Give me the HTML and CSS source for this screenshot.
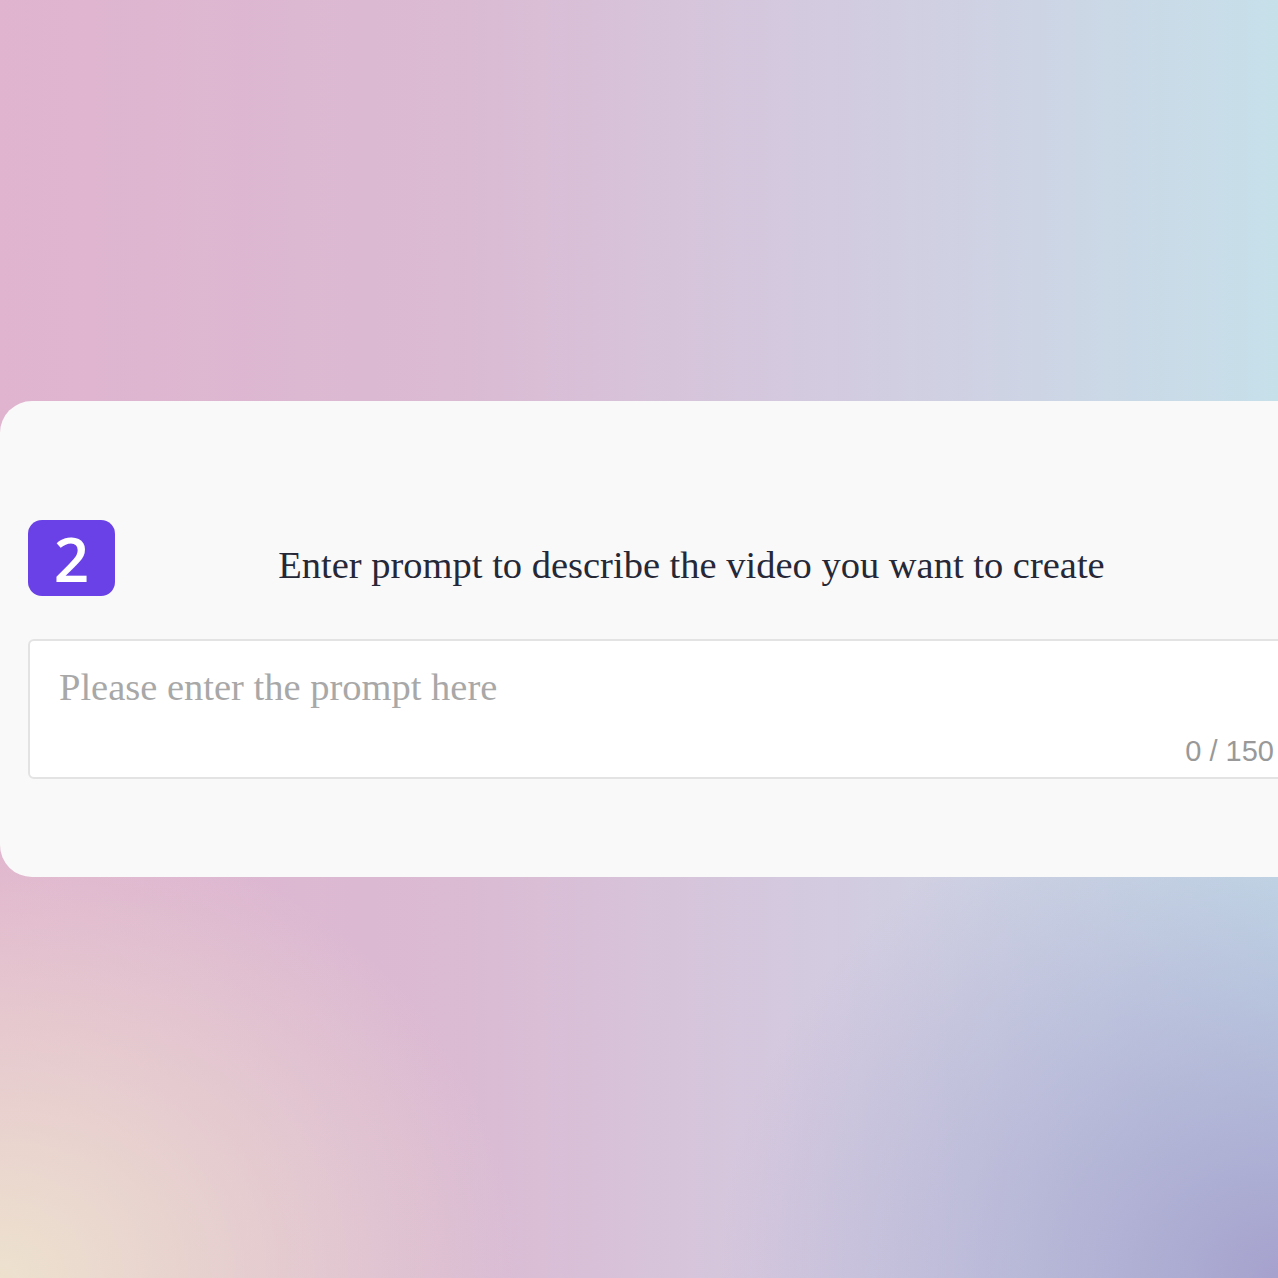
FILE: index.html
```html
<!DOCTYPE html>
<html lang="en">
<head>
<meta charset="utf-8">
<title>Prompt</title>
<link rel="stylesheet" href="styles.css">
</head>
<body>
<div class="page">
  <section class="card">
    <div class="step-row">
      <div class="badge">2</div>
      <h2 class="step-title">Enter prompt to describe the video you want to create</h2>
    </div>
    <div class="prompt-box">
      <div class="placeholder">Please enter the prompt here</div>
      <div class="counter">0 / 150</div>
    </div>
  </section>
</div>
</body>
</html>
```

FILE: styles.css
```css
html, body {
  margin: 0;
  padding: 0;
  width: 1278px;
  height: 1278px;
  overflow: hidden;
}
.page {
  width: 1278px;
  height: 1278px;
  overflow: hidden;
  padding-top: 401px;
  box-sizing: border-box;
  background:
    radial-gradient(ellipse 520px 460px at 0% 100%, rgba(238,228,206,0.95), rgba(238,228,206,0) 100%),
    radial-gradient(ellipse 560px 520px at 100% 100%, rgba(164,158,204,0.95), rgba(164,158,204,0) 100%),
    linear-gradient(to right, #e0b4cf 0%, #dbbad3 35%, #d3cbe0 65%, #c6e0ea 100%);
}
.card {
  width: 1340px;
  box-sizing: border-box;
  background: #f9f9f9;
  border-radius: 32px;
  padding: 119px 28px 98px 28px;
}
.step-row {
  display: flex;
  align-items: center;
  height: 76px;
}
.badge {
  width: 87px;
  height: 76px;
  flex: none;
  border-radius: 14px;
  background: #6a41e6;
  color: #ffffff;
  font-family: "Open Sans", sans-serif;
  font-weight: 600;
  font-size: 62px;
  line-height: 76px;
  text-align: center;
}
.step-title {
  flex: 1;
  margin: 0;
  padding-right: 44px;
  text-align: center;
  font-family: "Liberation Serif", "Times New Roman", serif;
  font-weight: normal;
  font-size: 38.5px;
  color: #262838;
  padding-top: 14px;
}
.prompt-box {
  margin-top: 43px;
  height: 140px;
  box-sizing: border-box;
  background: #ffffff;
  border: 2px solid #e3e3e3;
  border-radius: 6px;
  padding: 24px 36px 10px 29px;
  display: flex;
  flex-direction: column;
  justify-content: space-between;
}
.placeholder {
  font-family: "Liberation Serif", "Times New Roman", serif;
  font-size: 38.5px;
  color: #a8a8a8;
  line-height: 44px;
}
.counter {
  align-self: flex-end;
  font-family: "Liberation Sans", Arial, sans-serif;
  font-size: 29px;
  color: #999999;
  line-height: 32px;
}
```
